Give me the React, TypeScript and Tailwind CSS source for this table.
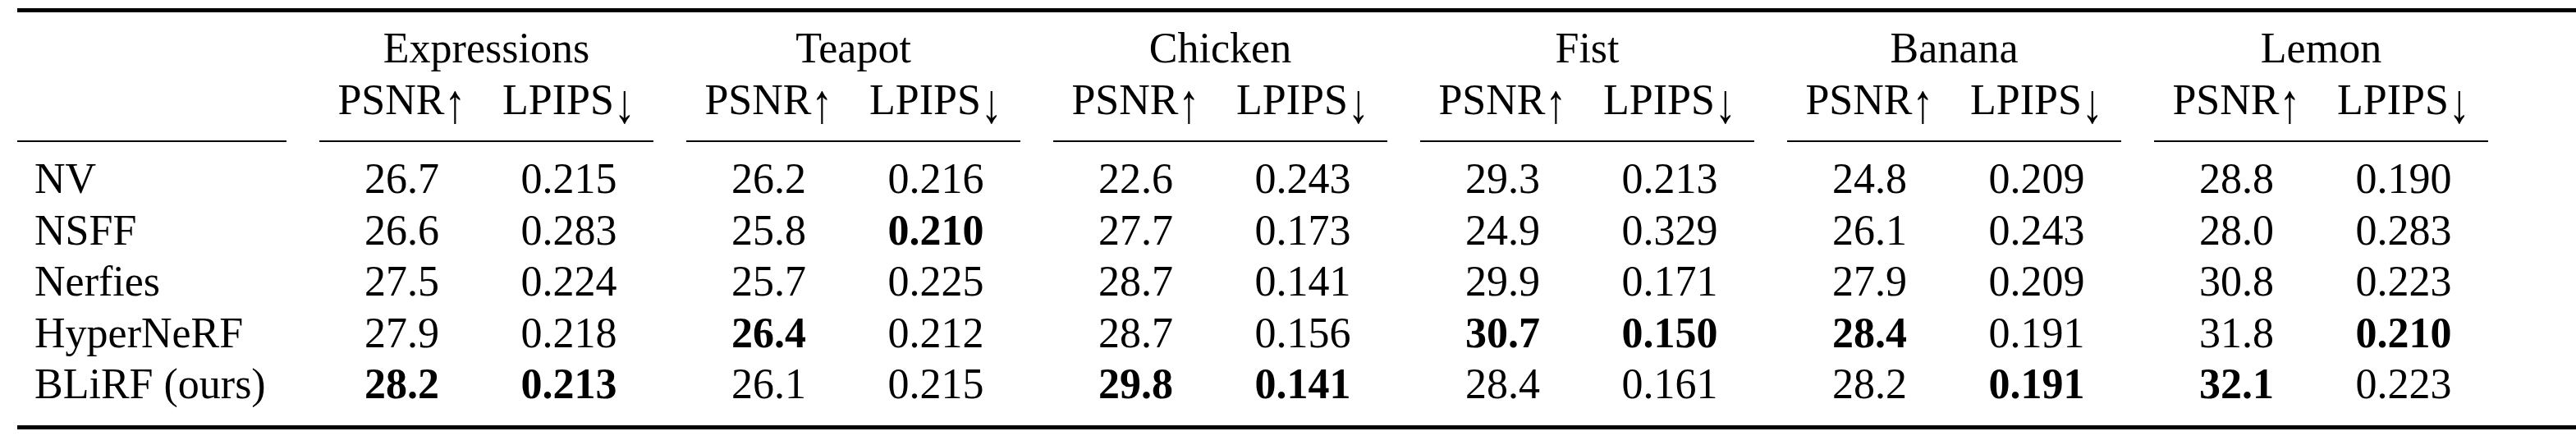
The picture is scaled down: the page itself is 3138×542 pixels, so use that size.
import React from 'react';

// Dados da tabela
const scenes = ['Expressions', 'Teapot', 'Chicken', 'Fist', 'Banana', 'Lemon'];

type Cell = { v: string; b?: boolean };

const rows: { method: string; cells: Cell[] }[] = [
  {
    method: 'NV',
    cells: [
      { v: '26.7' }, { v: '0.215' }, { v: '26.2' }, { v: '0.216' }, { v: '22.6' }, { v: '0.243' },
      { v: '29.3' }, { v: '0.213' }, { v: '24.8' }, { v: '0.209' }, { v: '28.8' }, { v: '0.190' },
    ],
  },
  {
    method: 'NSFF',
    cells: [
      { v: '26.6' }, { v: '0.283' }, { v: '25.8' }, { v: '0.210', b: true }, { v: '27.7' }, { v: '0.173' },
      { v: '24.9' }, { v: '0.329' }, { v: '26.1' }, { v: '0.243' }, { v: '28.0' }, { v: '0.283' },
    ],
  },
  {
    method: 'Nerfies',
    cells: [
      { v: '27.5' }, { v: '0.224' }, { v: '25.7' }, { v: '0.225' }, { v: '28.7' }, { v: '0.141' },
      { v: '29.9' }, { v: '0.171' }, { v: '27.9' }, { v: '0.209' }, { v: '30.8' }, { v: '0.223' },
    ],
  },
  {
    method: 'HyperNeRF',
    cells: [
      { v: '27.9' }, { v: '0.218' }, { v: '26.4', b: true }, { v: '0.212' }, { v: '28.7' }, { v: '0.156' },
      { v: '30.7', b: true }, { v: '0.150', b: true }, { v: '28.4', b: true }, { v: '0.191' }, { v: '31.8' }, { v: '0.210', b: true },
    ],
  },
  {
    method: 'BLiRF (ours)',
    cells: [
      { v: '28.2', b: true }, { v: '0.213', b: true }, { v: '26.1' }, { v: '0.215' }, { v: '29.8', b: true }, { v: '0.141', b: true },
      { v: '28.4' }, { v: '0.161' }, { v: '28.2' }, { v: '0.191', b: true }, { v: '32.1', b: true }, { v: '0.223' },
    ],
  },
];

// seta alongada, como o \uparrow do LaTeX
const Arrow = ({ c }: { c: string }) => (
  <span className="relative top-[5px] inline-block scale-y-[1.3]">{c}</span>
);

const App = () => {
  return (
    <div className="min-h-screen w-[3138px] bg-white pt-[10px] text-black font-['Liberation_Serif','Times_New_Roman',serif] text-[52px] leading-[62.5px]">
      <div className="ml-[21px] border-t-[5px] border-b-[5px] border-black">
        {/* Cabeçalho */}
        <div className="flex pt-[13px]">
          <div className="w-[348px] pr-[20px]">
            <div className="h-full border-b-2 border-black" />
          </div>
          {scenes.map((scene) => (
            <div key={scene} className="w-[447px] px-[20px]">
              <div className="border-b-2 border-black pb-[18px]">
                <div className="text-center">{scene}</div>
                <div className="flex">
                  <div className="w-[201px] text-center">
                    PSNR<Arrow c="↑" />
                  </div>
                  <div className="w-[206px] text-center">
                    LPIPS<Arrow c="↓" />
                  </div>
                </div>
              </div>
            </div>
          ))}
        </div>

        {/* Linhas de resultados */}
        <div className="pt-[14px] pb-[18px]">
          {rows.map((row) => (
            <div key={row.method} className="flex">
              <div className="w-[348px] pl-[21px]">{row.method}</div>
              {scenes.map((scene, g) => (
                <div key={scene} className="flex w-[447px] px-[20px]">
                  <div className={`w-[201px] text-center ${row.cells[g * 2].b ? 'font-bold' : ''}`}>
                    {row.cells[g * 2].v}
                  </div>
                  <div className={`w-[206px] text-center ${row.cells[g * 2 + 1].b ? 'font-bold' : ''}`}>
                    {row.cells[g * 2 + 1].v}
                  </div>
                </div>
              ))}
            </div>
          ))}
        </div>
      </div>
    </div>
  );
};

export default App;
